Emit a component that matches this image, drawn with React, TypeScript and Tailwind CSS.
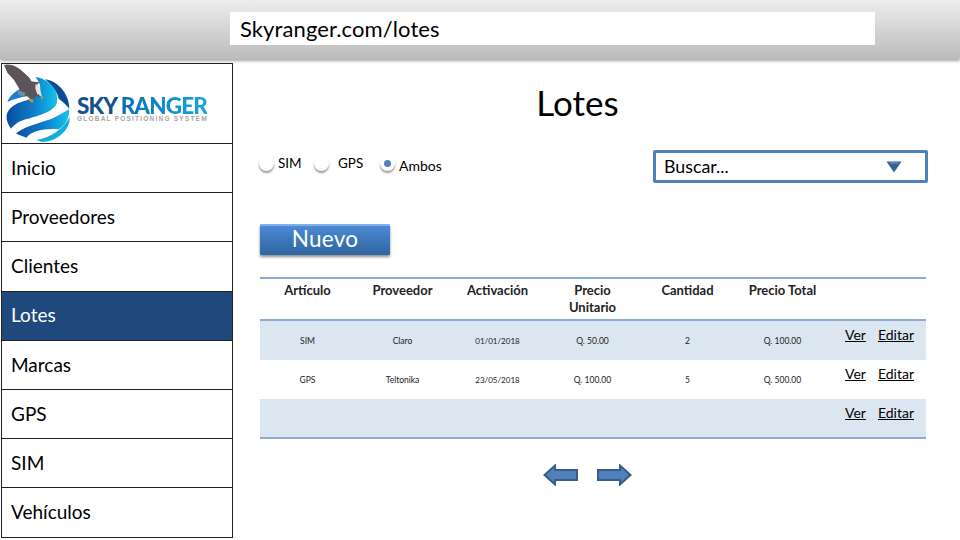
const navItems = ['Inicio', 'Proveedores', 'Clientes', 'Lotes', 'Marcas', 'GPS', 'SIM', 'Vehículos'];

const rows = [
  { articulo: 'SIM', proveedor: 'Claro', activacion: '01/01/2018', unitario: 'Q. 50.00', cantidad: '2', total: 'Q. 100.00' },
  { articulo: 'GPS', proveedor: 'Teltonika', activacion: '23/05/2018', unitario: 'Q. 100.00', cantidad: '5', total: 'Q. 500.00' },
  { articulo: '', proveedor: '', activacion: '', unitario: '', cantidad: '', total: '' },
];

function Logo() {
  return (
    <svg width="76" height="79" viewBox="6 6 228 237" className="shrink-0">
      <defs>
        <linearGradient id="band" x1="0" y1="0" x2="1" y2="0">
          <stop offset="0" stopColor="#0a4da0" />
          <stop offset="0.55" stopColor="#0f7fcb" />
          <stop offset="1" stopColor="#14c4ea" />
        </linearGradient>
      </defs>
      <path d="M22 120C32 92 60 78 92 68L85 102C60 106 40 112 22 120Z" fill="#1a7fc9" />
      <path d="M135 52C178 58 208 100 208 140C200 130 190 120 176 110C172 90 155 68 135 52Z" fill="#0d4a94" />
      <path d="M20 170C16 145 40 125 80 115C110 105 125 95 120 70C115 55 110 50 106 45C152 52 180 90 170 125C155 158 90 165 60 178C45 186 36 196 33 200C26 190 21 180 20 170Z" fill="url(#band)" />
      <path d="M48 214C80 190 130 182 165 166L207 142C210 165 197 190 176 202C140 197 90 207 80 227C70 224 58 220 48 214Z" fill="url(#band)" />
      <path d="M110 234C150 227 190 202 209 165C212 202 172 240 125 240Z" fill="#12aee0" />
      <path d="M12 9C30 3 54 14 72 32C82 42 90 46 94 58L108 60L118 60C112 68 108 72 106 78L112 96L122 108L110 102L100 112L92 112L76 98L60 84L42 54L22 32Z" fill="#5c5458" />
      <path d="M106 66L118 72L126 104L118 100L108 84Z" fill="#e4e6e6" />
      <path d="M122 98L130 108L124 112Z" fill="#d2a53a" />
      <path d="M88 110L98 112L100 122L90 120Z" fill="#c9952e" />
      <path d="M50 84L76 92L72 104L56 98Z" fill="#6d8ea6" />
    </svg>
  );
}

function Radio({ label, checked, labelClass }: { label: string; checked?: boolean; labelClass: string }) {
  return (
    <div className="flex items-start">
      <span className="flex h-[15px] w-[15px] items-center justify-center rounded-full bg-white shadow-[0_2px_2px_rgba(0,0,0,0.4)]">
        {checked && <span className="h-[7px] w-[7px] rounded-full bg-[#4f81bd]" />}
      </span>
      <span className={`leading-[17px] text-black ${labelClass}`}>{label}</span>
    </div>
  );
}

function Arrow({ flip }: { flip?: boolean }) {
  return (
    <svg width="35" height="22" viewBox="0 0 35 22" className={flip ? '-scale-x-100' : ''}>
      <path d="M34 6H12V1.5L1.5 11L12 20.5V16H34Z" fill="#4f81bd" stroke="#385d8a" strokeWidth="2" />
    </svg>
  );
}

export default function App() {
  return (
    <div className="flex h-[540px] w-[960px] flex-col overflow-hidden bg-white font-['Lato','Carlito',sans-serif] text-black">
      <div className="flex h-[59px] shrink-0 items-start bg-gradient-to-b from-[#ededed] to-[#bcbcbc] pl-[230px] pt-3 shadow-[0_2px_3px_rgba(0,0,0,0.35)]">
        <div className="flex h-[33px] w-[645px] items-center bg-white pl-[10px] text-[22px] tracking-[0.1px]">Skyranger.com/lotes</div>
      </div>

      <div className="mt-[4px] flex min-h-0 flex-1 items-start">
        <aside className="ml-px flex w-[232px] shrink-0 flex-col border border-[#222]">
          <div className="flex h-[79px] shrink-0 items-start">
            <Logo />
            <div className="-ml-px mt-[34px]">
              <div className="whitespace-nowrap text-[22.5px] font-black leading-[16px] tracking-[-0.9px]">
                <span className="text-[#14508f]">SKY </span>
                <span className="bg-gradient-to-r from-[#0a6dbb] to-[#1aa8d8] bg-clip-text text-transparent">RANGER</span>
              </div>
              <div className="mt-px whitespace-nowrap font-['Liberation_Sans',sans-serif] text-[6.5px] font-bold leading-[7px] tracking-[1.22px] text-[#a6a6a6]">GLOBAL POSITIONING SYSTEM</div>
            </div>
          </div>
          {navItems.map((item) => (
            <div
              key={item}
              className={`flex h-[49.2px] shrink-0 items-center border-t border-[#222] pl-[9px] text-[19px] ${item === 'Lotes' ? 'bg-[#1f497d] text-white' : ''}`}
            >
              {item}
            </div>
          ))}
        </aside>

        <main className="ml-[27px] w-[666px] shrink-0">
          <h1 className="mt-[18px] pr-[31px] text-center text-[35px] leading-[42px]">Lotes</h1>

          <div className="mt-[27px] flex items-start justify-between">
            <div className="-ml-px mt-[6px] flex items-start">
              <Radio label="SIM" labelClass="ml-[4px] -mt-px w-[22px] text-[13.5px]" />
              <div className="ml-[14px]">
                <Radio label="GPS" labelClass="ml-[9px] -mt-px w-[24px] text-[13.5px]" />
              </div>
              <div className="ml-[18px]">
                <Radio label="Ambos" checked labelClass="ml-[4px] mt-px text-[14px]" />
              </div>
            </div>
            <div className="-mr-[2px] flex h-[33px] w-[275px] items-center justify-between rounded-[2px] border-[3px] border-[#4f81bd] pl-[8px] pr-[23px] text-[17.8px]">
              <span className="-mt-px">Buscar...</span>
              <svg width="16" height="12" viewBox="0 0 16 12">
                <path d="M0.5 0.5H15.5L8 11.5Z" fill="#366092" />
                <path d="M3 1H13L12 3H4Z" fill="#4f81bd" />
              </svg>
            </div>
          </div>

          <button className="mt-[41px] block h-[31px] w-[130px] rounded-[1px] border-t-2 border-t-[#7fb0e8] bg-gradient-to-b from-[#4b8ad6] to-[#2f659f] pb-1 text-center text-[22.5px] leading-[24px] tracking-[0.3px] text-white shadow-[0_2px_3px_rgba(0,0,0,0.45)]">
            Nuevo
          </button>

          <div className="mt-[22px] border-y-2 border-[#8eaad0]">
            <div className="grid h-[42px] grid-cols-[95px_95px_95px_95px_95px_95px_1fr] border-b-2 border-[#8eaad0] pt-[3px] text-center text-[13px] font-bold leading-[17px] text-[#222]">
              <span>Artículo</span>
              <span>Proveedor</span>
              <span>Activación</span>
              <span>Precio<br />Unitario</span>
              <span>Cantidad</span>
              <span>Precio Total</span>
              <span />
            </div>
            {rows.map((row, i) => (
              <div
                key={i}
                className={`grid h-[39px] grid-cols-[95px_95px_95px_95px_95px_95px_1fr] items-center pt-[2px] text-center text-[8.5px] text-[#222] last:h-[38px] ${i % 2 === 0 ? 'bg-[#dce6f1]' : 'bg-white'}`}
              >
                <span>{row.articulo}</span>
                <span>{row.proveedor}</span>
                <span className="-mt-px text-[8px]">{row.activacion}</span>
                <span>{row.unitario}</span>
                <span>{row.cantidad}</span>
                <span>{row.total}</span>
                <div className="-mt-[14px] flex justify-end gap-3 pr-3 text-[14px] text-black underline">
                  <span>Ver</span>
                  <span>Editar</span>
                </div>
              </div>
            ))}
          </div>

          <div className="ml-[283px] mt-[25px] flex gap-[19px]">
            <Arrow />
            <Arrow flip />
          </div>
        </main>
      </div>
    </div>
  );
}
